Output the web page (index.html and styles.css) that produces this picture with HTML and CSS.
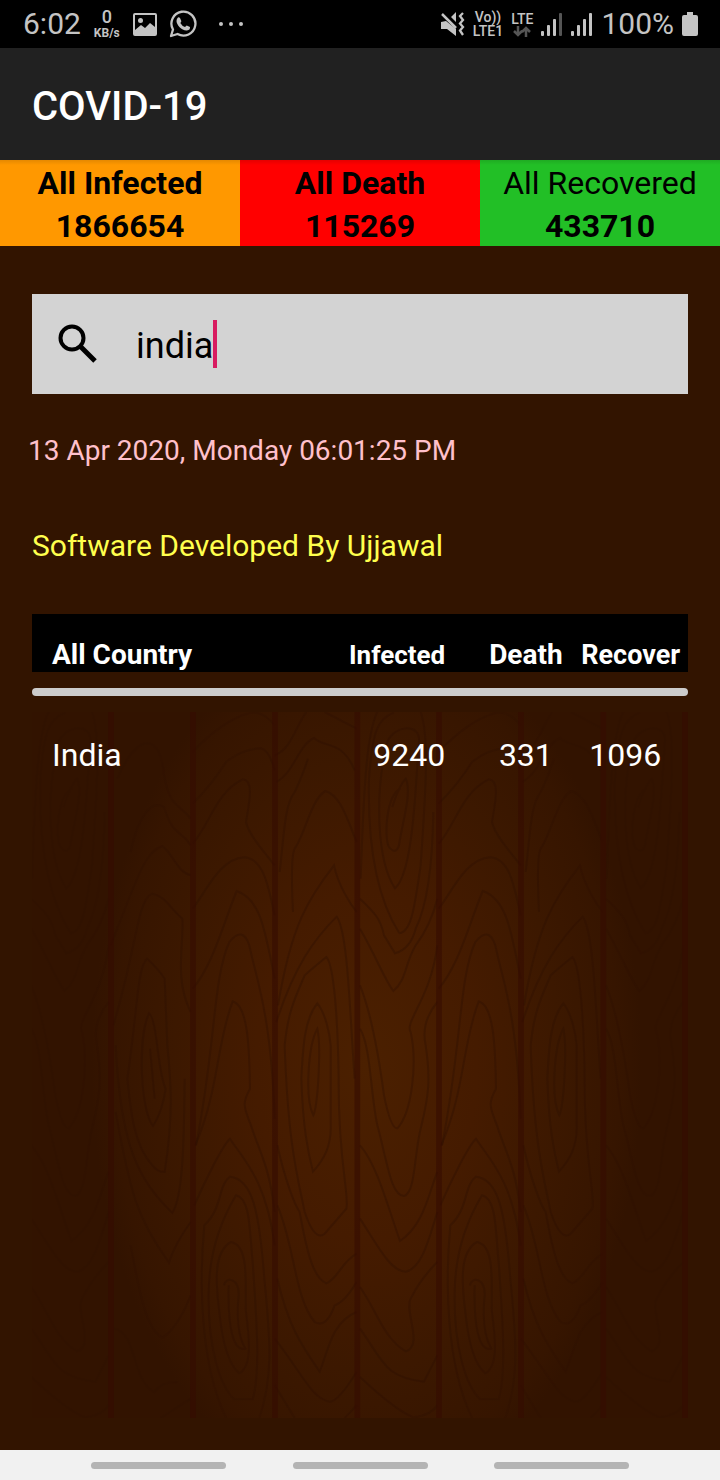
FILE: index.html
```html
<!DOCTYPE html>
<html lang="en">
<head>
<meta charset="utf-8">
<meta name="viewport" content="width=device-width, initial-scale=1">
<title>COVID-19</title>
<link rel="stylesheet" href="styles.css">
</head>
<body>
<div class="status">
  <div class="status-left">
    <span class="clock">6:02</span>
    <span class="speed"><span class="speed-value">0</span><span class="speed-unit">KB/s</span></span>
    <svg class="icon-picture" width="24" height="23" viewBox="0 0 24 23" fill="#c4c4c4"><path fill-rule="evenodd" d="M2 0H22Q24 0 24 2V21Q24 23 22 23H2Q0 23 0 21V2Q0 0 2 0ZM2 2V17L8 12L12 15L17 10L22 14V2Z"/><circle cx="7.500" cy="7.500" r="2.500"/></svg>
    <svg class="icon-chat" width="28" height="28" viewBox="0 0 28 28"><path d="M2 26L4 19.500A12 12 0 1 1 8.500 24Z" fill="none" stroke="#c4c4c4" stroke-width="2.300" stroke-linejoin="round"/><path d="M9 7.500Q10 7 11 8L12.300 11Q12.400 12 11.300 13Q13 16 16 17L17.700 15.500L21 17Q21.300 20 18 20.500C13 21 7.500 15 7.500 11Q7.500 8.500 9 7.500Z" fill="#c4c4c4"/></svg>
    <svg class="icon-more" width="26" height="6" viewBox="0 0 26 6" fill="#c4c4c4"><circle cx="3" cy="3" r="2"/><circle cx="13" cy="3" r="2"/><circle cx="23" cy="3" r="2"/></svg>
  </div>
  <div class="status-right">
    <svg width="24" height="24" viewBox="0 0 24 24"><path d="M0 10L5 9L15 17V24L6 17H0ZM10 5L15 0V10Z" fill="#c4c4c4"/><path d="M1 2L15 16" stroke="#c4c4c4" stroke-width="2.500"/><path d="M22 1L19 4L22 8L19 11.500L22 15L19 18.500L22 23" fill="none" stroke="#c4c4c4" stroke-width="2.300"/></svg>
    <span class="net"><span>Vo))</span><span>LTE1</span></span>
    <span class="net"><span>LTE</span><svg width="18" height="11" viewBox="0 0 18 11" fill="none" stroke="#555" stroke-width="2.500"><path d="M5 0V9M1 5L5 9L9 5M13 11V2M9 6L13 2L17 6"/></svg></span>
    <svg class="signal" width="22" height="23" viewBox="0 0 22 23" fill="#c4c4c4"><rect y="18" width="3" height="5" rx="1"/><rect x="6" y="12" width="3" height="11" rx="1"/><rect x="12" y="6" width="3" height="17" rx="1"/><rect x="18" width="3" height="23" rx="1" fill="#555"/></svg>
    <svg class="signal" width="22" height="23" viewBox="0 0 22 23" fill="#c4c4c4"><rect y="18" width="3" height="5" rx="1"/><rect x="6" y="12" width="3" height="11" rx="1"/><rect x="12" y="6" width="3" height="17" rx="1"/><rect x="18" width="3" height="23" rx="1"/></svg>
    <span class="battery-level">100%</span>
    <svg width="16" height="24" viewBox="0 0 16 24"><path d="M5 0H11V3H14Q16 3 16 5V22Q16 24 14 24H2Q0 24 0 22V5Q0 3 2 3H5Z" fill="#c4c4c4"/></svg>
  </div>
</div>

<header class="app-bar"><h1>COVID-19</h1></header>

<section class="totals">
  <div class="total infected"><span class="strong">All Infected</span><span class="strong">1866654</span></div>
  <div class="total death"><span class="strong">All Death</span><span class="strong">115269</span></div>
  <div class="total recovered"><span>All Recovered</span><span class="strong">433710</span></div>
</section>

<main class="content">
  <div class="search">
    <label for="country" aria-label="Search country"><svg width="40" height="40" viewBox="0 0 40 40" fill="none" stroke="#000"><circle cx="14" cy="14" r="11.500" stroke-width="4"/><path d="M22 22L37 37" stroke-width="5"/></svg></label>
    <input id="country" type="text" value="india">
    <span class="caret"></span>
  </div>
  <p class="date">13 Apr 2020, Monday 06:01:25 PM</p>
  <p class="credit">Software Developed By Ujjawal</p>

  <div class="report">
    <svg class="wood" viewBox="0 0 1968 2118" preserveAspectRatio="none" aria-hidden="true">
      <defs>
        <radialGradient id="glow" cx=".51" cy=".5" r=".5" gradientTransform="translate(.51 .5) scale(.84 1.24) translate(-.51 -.5)">
          <stop offset="0" stop-color="#4b2000"/><stop offset=".4" stop-color="#451b00"/><stop offset=".7" stop-color="#3c1800"/><stop offset=".92" stop-color="#361500"/><stop offset="1" stop-color="#321300"/>
        </radialGradient>
        <radialGradient id="fade" cx=".51" cy=".5" r=".5" gradientTransform="translate(.51 .5) scale(.9 1.24) translate(-.51 -.5)">
          <stop offset="0" stop-color="#fff"/><stop offset=".75" stop-color="#ddd"/><stop offset="1" stop-color="#444"/>
        </radialGradient>
        <mask id="depth"><rect width="1968" height="2118" fill="url(#fade)"/></mask>
        <g id="plank-a">
          <path d="M10 500C20 200 30 60 60 0M130 229C85 250 80 380 95 405Q115 430 125 400C135 330 165 240 145 200Q125 220 105 285M113 529C60 450 50 250 90 90C110 40 190 30 185 90C175 200 170 480 113 529ZM126 664C60 560 30 400 35 200C45 60 60 20 110 2M190 0C220 80 200 300 190 460C170 600 160 660 126 664M8 560C50 600 70 620 80 670L113 724Q160 710 175 650C200 600 225 500 228 300"/>
          <path d="M8 650C60 740 80 800 108 837C150 800 140 760 175 700Q220 640 240 560M8 820C40 900 60 1000 80 1150Q100 1250 120 1249C165 1200 180 1050 160 960C140 930 220 860 240 700M8 950C40 1000 40 1150 60 1240C90 1350 100 1450 140 1452C175 1440 170 1330 190 1250C215 1150 220 1100 205 1000Q190 930 240 870M8 1300C60 1360 90 1480 128 1587C200 1540 215 1440 240 1380"/>
          <path d="M8 1520C60 1600 100 1679 145 1679C190 1670 210 1600 240 1500M8 1725C60 1800 80 1880 145 1918C200 1900 140 1800 160 1760Q190 1700 240 1650M8 1850C80 1950 80 1995 200 2009L240 1930M8 1995Q120 2100 170 2116Q220 2110 240 2080"/>
        </g>
        <g id="plank-b">
          <path d="M20 200C80 60 150 60 160 190C180 290 200 270 240 320M60 420C80 320 120 260 160 285C190 380 210 350 240 400M0 700C80 500 100 420 155 402C190 430 200 480 240 490M8 940C80 700 80 560 125 545C160 550 180 590 215 620C220 700 190 800 240 900M50 1100C80 900 80 760 110 740Q150 780 162 800L170 1000C180 1100 190 1200 162 1380Q140 1380 125 1360C70 1300 60 1200 50 1100"/>
          <path d="M115 904C80 980 90 1200 127 1242Q155 1200 165 1130C140 1080 140 920 115 904ZM118 1010L132 1160M15 1000C30 1300 80 1400 185 1503C220 1450 220 1250 222 1100M15 1200C60 1450 80 1520 175 1652Q190 1600 240 1530M60 1600C80 1700 100 1850 155 1877Q200 1850 240 1750M10 1850C80 1860 60 2000 130 2040Q150 2010 200 2010M150 2118L240 2060"/>
        </g>
        <g id="plank-c">
          <path d="M0 120Q90 25 170 3Q210-5 246 40M0 275Q60 215 100 150Q150 110 205 109Q230 115 246 175M0 395C50 340 70 240 150 202C185 205 170 270 160 330C165 360 205 410 246 460M0 590C40 540 80 440 155 436C210 440 225 510 246 610M0 830C60 760 90 640 132 537C200 560 215 640 246 800M10 1300C70 1000 60 800 110 690Q150 640 170 700C190 800 235 900 246 1220"/>
          <path d="M8 1300C80 1130 70 1000 120 868C165 880 170 1000 172 1130C150 1170 150 1180 175 1240C200 1320 230 1360 246 1500M5 1480C40 1400 90 1300 112 1280C150 1340 220 1400 246 1600M100 2118C20 1950 20 1700 35 1540C90 1490 75 1420 112 1394C180 1400 200 1500 215 1700C235 1900 240 2000 200 2118"/>
          <path d="M130 1450C100 1500 50 1600 48 1740C45 1900 80 2020 125 2062L180 2062C205 1980 190 1800 180 1650C170 1560 175 1460 130 1450ZM115 1590C60 1620 70 1720 80 1800C90 1900 110 1960 140 1984C180 1960 170 1880 160 1800C155 1740 175 1600 115 1590ZM94 1720C100 1690 140 1700 138 1750C130 1830 140 1880 158 1910C120 1920 105 1840 108 1720"/>
        </g>
        <g id="plank-d">
          <path d="M0 130C50 110 60 50 95 0M150 0L246 50M5 210C60 180 70 100 118 78C150 110 200 80 240 175M15 480C30 350 30 280 60 240C80 200 90 170 100 140M55 600C50 500 50 430 60 410C90 370 110 260 152 237C200 250 220 330 246 390M10 880C50 640 100 560 178 460C190 520 230 580 246 600M5 930C60 760 120 680 186 614C220 660 225 900 240 1100"/>
          <path d="M115 1379C150 1340 170 1300 168 1240V1000C165 960 150 900 128 874C90 920 85 1000 80 1100C85 1250 100 1320 115 1379ZM116 1210C90 1160 100 1000 128 950C140 1000 130 1180 116 1210ZM30 1000C40 1300 70 1400 90 1500Q120 1590 150 1565L215 1490C225 1450 190 1350 192 1100C190 950 180 760 155 735Q100 780 90 790C60 860 40 900 30 1000Z"/>
          <path d="M8 1300C30 1400 60 1480 75 1500C100 1640 120 1700 155 1714C190 1700 200 1650 246 1625M8 1480C60 1600 60 1760 120 1830Q155 1850 180 1780Q210 1770 246 1710M8 1700C40 1840 80 1900 135 1979C160 1920 170 1830 246 1800M0 1880C80 1980 110 2060 165 2069Q190 2070 246 1980M0 2020L60 2118M210 2118L246 2080"/>
        </g>
      </defs>
      <rect width="1968" height="2118" fill="url(#glow)"/>
      <g class="grain" mask="url(#depth)">
        <use href="#plank-a" x="-10"/><use href="#plank-b" x="236"/><use href="#plank-c" x="482"/><use href="#plank-d" x="728"/>
        <use href="#plank-a" x="976"/><use href="#plank-c" x="1220"/><use href="#plank-d" x="1466"/><use href="#plank-a" x="1714"/>
      </g>
      <path class="seams" d="M237 0V2118M483 0V2118M729 0V2118M976 0V2118M1221 0V2118M1467 0V2118M1714 0V2118M1959 0V2118"/>
    </svg>
    <table>
      <thead>
        <tr><th class="country big">All Country</th><th class="num">Infected</th><th class="mid big">Death</th><th class="last">Recover</th></tr>
      </thead>
      <tbody>
        <tr class="rule"><td colspan="4"><div class="bar"></div></td></tr>
        <tr class="row"><td class="country">India</td><td class="num">9240</td><td class="mid">331</td><td class="last">1096</td></tr>
      </tbody>
    </table>
  </div>
</main>

<nav class="nav">
  <button type="button" aria-label="Recent apps"></button>
  <button type="button" aria-label="Home"></button>
  <button type="button" aria-label="Back"></button>
</nav>
</body>
</html>
```

FILE: styles.css
```css
* { box-sizing: border-box; }

body {
  margin: 0;
  min-height: 100vh;
  display: flex;
  flex-direction: column;
  background: #321400;
  color: #fff;
  font-family: Roboto, "Liberation Sans", sans-serif;
}

.status {
  height: 48px;
  padding: 0 22px 0 23px;
  display: flex;
  justify-content: space-between;
  align-items: center;
  background: #000;
  color: #c4c4c4;
}
.status-left, .status-right { display: flex; align-items: center; }
.status-right { gap: 8px; }
.clock, .battery-level { font-size: 30px; line-height: 50px; }
.speed { display: flex; flex-direction: column; align-items: center; margin: 0 13px; }
.speed-value { font-size: 18px; line-height: 18px; font-weight: 500; }
.speed-unit { font-size: 12px; line-height: 14px; font-weight: 700; }
.icon-chat { margin-left: 12px; }
.icon-more { margin-left: 21px; }
.net {
  display: flex;
  flex-direction: column;
  align-items: center;
  font-size: 14px;
  line-height: 14px;
  font-weight: 500;
}

.app-bar {
  height: 112px;
  padding: 0 32px;
  display: flex;
  align-items: center;
  background: #212121;
}
.app-bar h1 { margin: 0; padding-top: 6px; font-size: 40px; line-height: 48px; font-weight: 500; }

.totals { display: grid; grid-template-columns: repeat(3, 1fr); color: #000; }
.total {
  display: flex;
  flex-direction: column;
  align-items: center;
  font-size: 32px;
  line-height: 43px;
  padding-top: 2px;
  height: 86px;
  background-image: linear-gradient(rgba(0, 0, 0, .1), transparent 5px);
}
.strong { font-weight: 700; }
.infected { background-color: #ff9800; }
.death { background-color: #f00; }
.recovered { background-color: #22bf26; }

.content {
  flex: 1;
  padding: 48px 32px 32px;
  display: flex;
  flex-direction: column;
}

.search {
  height: 100px;
  padding: 0 26px;
  display: flex;
  align-items: center;
  background: #d3d3d3;
}
.search label { display: flex; margin-right: 38px; }
.search input {
  field-sizing: content;
  min-width: 0;
  padding: 4px 0 0;
  border: 0;
  outline: 0;
  background: none;
  color: #000;
  font: 36px/44px Roboto, "Liberation Sans", sans-serif;
}
.caret { width: 4px; height: 48px; background: #d81b60; }

.date { margin: 39px -4px 0; font-size: 28px; line-height: 36px; color: #ffc0cb; }
.credit { margin: 59px 0 0; font-size: 30px; line-height: 36px; color: #ffff4d; }

.report { position: relative; flex: 1; margin-top: 50px; display: flex; }
.wood {
  position: absolute;
  top: 98px;
  left: 0;
  width: 100%;
  height: calc(100% - 98px);
}
.grain { fill: none; stroke: #280c00; stroke-opacity: .32; stroke-width: 6; }
.seams { fill: none; stroke: #350b00; stroke-opacity: .6; stroke-width: 17; }

table { position: relative; width: 100%; height: 100%; table-layout: fixed; border-collapse: collapse; }
th, td { padding: 0; font-size: 32px; line-height: 38px; text-align: left; }
thead tr { height: 58px; background: #000; }
th { font-size: 26px; line-height: 34px; vertical-align: bottom; font-weight: 700; }
th.big { font-size: 28px; }
th.last { font-size: 27px; }
.country { width: 43%; padding-left: 20px; }
.num { width: 20%; text-align: right; }
.mid { width: 20%; padding-left: 30px; text-align: center; }
.last { width: 17%; padding-right: 3px; text-align: center; }
td.last { padding-right: 14px; }
.rule { height: 40px; }
.rule td { vertical-align: top; padding-top: 16px; }
.bar { height: 8px; border-radius: 4px; background: #ccc; }
.row td { padding-top: 24px; vertical-align: top; }

.nav {
  height: 30px;
  padding: 0 91px;
  display: flex;
  justify-content: space-between;
  align-items: center;
  background: #f1f1f1;
}
.nav button {
  width: 135px;
  height: 7px;
  padding: 0;
  border: 0;
  border-radius: 4px;
  background: #b4b4b4;
}
```
